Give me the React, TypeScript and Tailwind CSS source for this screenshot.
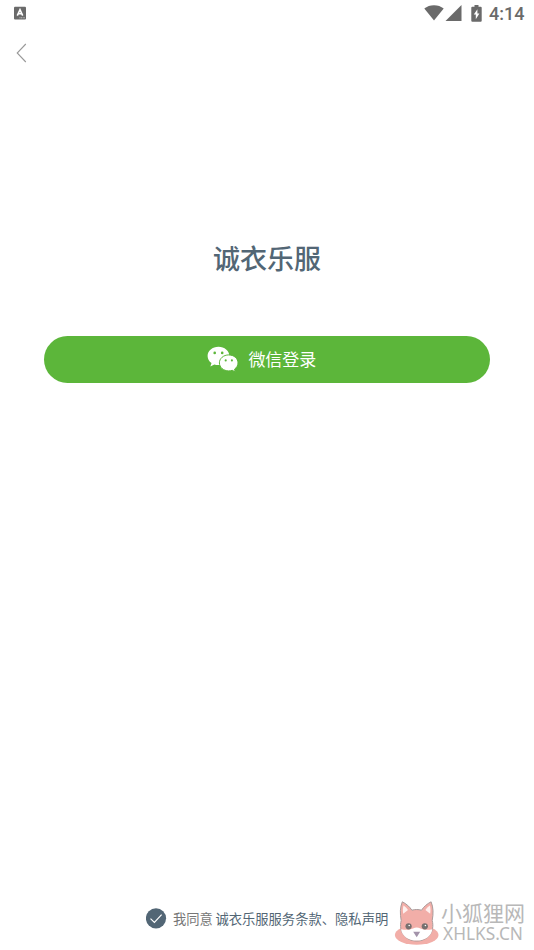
const CJK = "font-['Noto_Sans_CJK_SC','Noto_Sans',sans-serif]";

function StatusBar() {
  return (
    <div className="flex h-[26px] items-center justify-between pr-[9px] pl-3.5 text-[#6a6a6a]">
      <svg width="13" height="14" viewBox="0 0 13 14">
        <rect x="0" y="0.8" width="12" height="12.6" rx="1" fill="currentColor" />
        <path d="M3.3 9.600 6 3.600l2.700 6M4.300 7.800h3.400" fill="none" stroke="#fff" strokeWidth="1.600" />
        <path d="M5.500 11.800H11" stroke="#ddd" strokeWidth="0.800" strokeDasharray="1 0.600" />
      </svg>

      <div className="flex items-center">
        <svg width="20" height="16" viewBox="0 0 20 16" fill="currentColor">
          <path d="M10 15.500 0.300 3.600C3 1.500 6.200.300 10 .300s7 1.200 9.700 3.300z" />
        </svg>
        <svg className="ml-px" width="17" height="16" viewBox="0 0 17 16" fill="currentColor">
          <path d="M16.500 0v16H.500z" />
        </svg>
        <svg className="ml-[9px]" width="11" height="17" viewBox="0 0 11 17">
          <path
            d="M3.500 0h4v1.700h2.200a1 1 0 0 1 1 1v13.100a1 1 0 0 1-1 1H1.300a1 1 0 0 1-1-1V2.700a1 1 0 0 1 1-1h2.200z"
            fill="currentColor"
          />
          <path d="M6.400 4.200 2.800 9.600h2v4.600l3.600-5.600h-2z" fill="#fff" />
        </svg>
        <span className="ml-[7px] w-9 pt-px font-[Roboto,sans-serif] text-[18px] leading-none font-medium whitespace-nowrap">
          4:14
        </span>
      </div>
    </div>
  );
}

function WechatIcon() {
  return (
    <svg width="32" height="26" viewBox="0 0 32 26">
      <path
        d="M11.500.8C5.400.8.600 4.900.600 10c0 2.900 1.500 5.400 3.900 7.100l-1.100 3.300 3.900-2c1.300.4 2.700.7 4.200.7 6 0 10.800-4.100 10.800-9.200S17.500.8 11.500.8z"
        fill="#fff"
      />
      <path
        d="M21.700 8.900c-5.200 0-9.300 3.600-9.300 8s4.100 8 9.300 8c1.200 0 2.400-.2 3.500-.6l3.100 1.600-.8-2.700c2.200-1.500 3.500-3.800 3.500-6.300 0-4.400-4.100-8-9.300-8z"
        fill="#fff"
        stroke="#5cb63a"
        strokeWidth="1"
      />
      <g fill="#5cb63a">
        <circle cx="7.700" cy="6.900" r="1.300" />
        <circle cx="15.200" cy="6.900" r="1.300" />
        <circle cx="18.700" cy="14.400" r="1.050" />
        <circle cx="24.900" cy="14.400" r="1.050" />
      </g>
    </svg>
  );
}

function Fox() {
  return (
    <svg width="46" height="46" viewBox="0 0 46 46">
      <ellipse cx="22.700" cy="35" rx="21.800" ry="9.800" fill="#f2aea8" />
      <path
        d="M7.200 20.500C5.900 13.500 6 7.500 8.300 1.800c4 2 7.200 4.800 9.600 8.400 3.100-.9 6.500-.9 9.600 0 2.400-3.600 5.600-6.400 9.600-8.400 2.300 5.700 2.400 11.700 1.100 18.700 2.900 11-4.300 20.500-15.500 20.500S4.300 31.500 7.200 20.500z"
        fill="#f2aea8"
        stroke="#a99b9b"
        strokeWidth="1"
      />
      <path
        d="M9.200 13.800c-.5-3.200-.4-5.800.3-8.300 1.900 1.200 3.300 2.600 4.500 4.600zM36.200 13.800c.5-3.200.4-5.800-.3-8.300-1.900 1.200-3.300 2.600-4.500 4.600z"
        fill="#fff0ee"
      />
      <path
        d="M7 29.200c4.500.8 8.500.8 12-.8 2.500-1.200 4.900-1.200 7.400 0 3.500 1.600 7.500 1.600 12 .8C37.200 36 31.500 40.600 22.700 40.600S8.200 36 7 29.200z"
        fill="#fff"
      />
      <circle cx="14.600" cy="26.300" r="3.100" fill="#77706f" />
      <circle cx="30.800" cy="26.300" r="3.100" fill="#77706f" />
      <circle cx="15.200" cy="25.500" r="0.800" fill="#fff" />
      <circle cx="31.400" cy="25.500" r="0.800" fill="#fff" />
      <path d="M19.200 31.800h7l-3.500 5.400z" fill="#a393aa" />
    </svg>
  );
}

function Watermark() {
  return (
    <div className="flex items-start text-[#b8b8b8]">
      <Fox />
      <div className="ml-px pt-px whitespace-nowrap">
        <p className="h-[23px] text-[21px] leading-[22px]">小狐狸网</p>
        <p className="ml-0.5 font-['Noto_Sans',sans-serif] text-[17.3px] leading-[19px]">XHLKS.CN</p>
      </div>
    </div>
  );
}

export default function App() {
  return (
    <div className={`flex h-[950px] w-[534px] flex-col overflow-hidden bg-white ${CJK}`}>
      <StatusBar />

      <header className="flex h-[53px] items-center pl-4">
        <button aria-label="返回">
          <svg width="11" height="20" viewBox="0 0 11 20">
            <path d="M9.800 1 1.200 10l8.600 9" fill="none" stroke="#999" strokeWidth="1.100" />
          </svg>
        </button>
      </header>

      <main className="flex flex-1 flex-col px-[44.4px] pt-[159px]">
        <h1 className="text-center text-[27px] leading-10 font-medium text-[#526675]">诚衣乐服</h1>
        <button className="mt-[58px] flex h-[47px] items-center rounded-full bg-[#5cb63a] pb-px pl-[162.6px] text-[17px] text-white">
          <WechatIcon />
          <span className="ml-[9.4px]">微信登录</span>
        </button>
      </main>

      <footer className="flex h-[50px] items-start pl-[146px]">
        <div className="flex h-9 w-[248px] items-center text-[13.3px] whitespace-nowrap">
          <svg width="21" height="21" viewBox="0 0 21 21">
            <circle cx="10" cy="10.300" r="10.100" fill="#526675" />
            <path d="m4.500 10.600 3.900 3.800 7.200-7.700" fill="none" stroke="#fff" strokeWidth="1.200" />
          </svg>
          <span className="ml-1.5 pt-px text-[#777]">我同意</span>
          <span className="ml-[2.5px] pt-px text-[#526675]">诚衣乐服服务条款、隐私声明</span>
        </div>
        <Watermark />
      </footer>
    </div>
  );
}
